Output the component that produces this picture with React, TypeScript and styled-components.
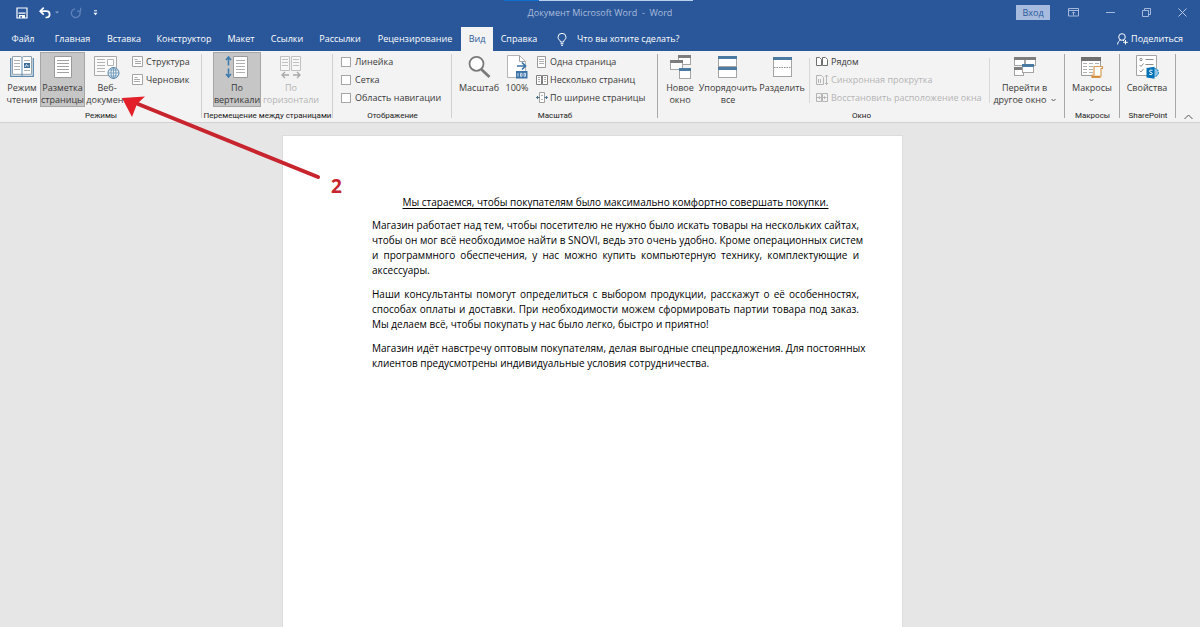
import React from "react";
import styled, { createGlobalStyle, css } from "styled-components";

const Global = createGlobalStyle`
  *, *::before, *::after { box-sizing: border-box; }
  html, body, #root { height: 100%; }
  body {
    margin: 0;
    overflow: hidden;
    background: #e6e6e6;
    color: #3a3a3a;
    font: 10px/12px "Open Sans", "Noto Sans", sans-serif;
  }
  button { font: inherit; color: inherit; background: none; border: 0; padding: 0; margin: 0; }
  svg { display: block; flex: none; }
`;

const Shell = styled.div`
  position: relative;
  display: flex;
  flex-direction: column;
  height: 100%;
`;

/* ---------- title bar ---------- */

const Header = styled.header`
  background: #2a579a;
  color: #fff;
`;

const TitleBar = styled.div`
  display: grid;
  grid-template-columns: 1fr auto 1fr;
  align-items: center;
  height: 27px;
  padding-bottom: 2px;
`;

const QuickAccess = styled.div`
  display: flex;
  align-items: center;
  gap: 11px;
  padding-left: 16px;
`;

const UndoGroup = styled.div`
  display: flex;
  align-items: center;
  gap: 4px;
`;

const IconButton = styled.button`
  display: flex;
  align-items: center;
  justify-content: center;
`;

const DocTitle = styled.h1`
  margin: 0;
  font-size: 9px;
  font-weight: 400;
  color: #a9bcdc;
  white-space: pre;
`;

const WindowTools = styled.div`
  display: flex;
  align-items: center;
  justify-content: flex-end;
  padding-right: 13px;
  gap: 27px;
`;

const SignIn = styled.button`
  width: 34px;
  height: 15px;
  margin-right: -9px;
  background: #a6bbdd;
  color: #2a579a;
  font-size: 9px;
`;

const TopStrip = styled.div`
  position: absolute;
  top: 0;
  left: 42%;
  width: 189px;
  height: 1px;
  background: linear-gradient(to right, #0f6fd0 0 35px, #b9cfee 35px);
`;

/* ---------- tabs ---------- */

const TabRow = styled.nav`
  display: flex;
  height: 24px;
`;

const Tab = styled.button<{ $width: number; $active?: boolean }>`
  width: ${(p) => p.$width}px;
  font-size: 9px;
  text-align: center;
  white-space: nowrap;
  ${(p) =>
    p.$active &&
    css`
      background: #f3f3f3;
      color: #2a579a;
    `}
`;

const TellMe = styled.button`
  display: flex;
  align-items: center;
  gap: 10px;
  margin-left: 12px;
  font-size: 9px;
`;

const Share = styled.button`
  display: flex;
  align-items: center;
  gap: 3px;
  margin-left: auto;
  padding-right: 17px;
  font-size: 9px;
`;

/* ---------- ribbon ---------- */

const Ribbon = styled.div`
  display: flex;
  height: 72px;
  background: #f3f3f3;
  border-bottom: 1px solid #d2d2d2;
`;

const Group = styled.section<{ $width: number; $strong?: boolean }>`
  position: relative;
  display: flex;
  flex-direction: column;
  width: ${(p) => p.$width}px;
  &::after {
    content: "";
    position: absolute;
    right: 0;
    top: 3px;
    bottom: 4px;
    width: 1px;
    background: ${(p) => (p.$strong ? "#a8a8a8" : "#d0d0d0")};
  }
`;

const GroupBody = styled.div<{ $indent?: number }>`
  display: flex;
  flex: 1;
  padding: 1px 0 0 ${(p) => p.$indent ?? 0}px;
`;

const GroupName = styled.h2`
  margin: 0;
  height: 13px;
  font: 400 8px/13px Roboto, "Open Sans", sans-serif;
  color: #222;
  text-align: center;
  white-space: nowrap;
`;

const BigButton = styled.button<{ $width: number; $pressed?: boolean }>`
  display: flex;
  flex-direction: column;
  align-items: center;
  gap: 3px;
  width: ${(p) => p.$width}px;
  height: 55px;
  padding-top: 3px;
  font-size: 9px;
  line-height: 12px;
  white-space: pre;
  &:disabled { color: #b4b4b4; }
  ${(p) =>
    p.$pressed &&
    css`
      background: #c6c6c6;
      outline: 1px solid #a6a6a6;
      outline-offset: -1px;
    `}
`;

const Stack = styled.div<{ $left?: number }>`
  display: flex;
  flex-direction: column;
  margin: 1px 0 0 ${(p) => p.$left ?? 0}px;
`;

const SmallButton = styled.button`
  display: flex;
  align-items: center;
  gap: 2px;
  height: 18px;
  font-size: 9px;
  white-space: nowrap;
  &:disabled { color: #b4b4b4; }
`;

const CheckLabel = styled.label`
  display: flex;
  align-items: center;
  gap: 4px;
  height: 18px;
  font-size: 9px;
  white-space: nowrap;
`;

const CheckBox = styled.input`
  appearance: none;
  width: 10px;
  height: 10px;
  margin: 0;
  border: 1px solid #a6a6a6;
  background: #fff;
`;

const Divider = styled.div`
  width: 1px;
  height: 45px;
  margin-top: 5px;
  background: #d8d8d8;
`;

const Collapse = styled.button`
  display: flex;
  align-items: flex-end;
  margin-left: auto;
  padding: 0 7px 2px 0;
`;

/* ---------- document ---------- */

const Workspace = styled.main`
  flex: 1;
  display: flex;
  justify-content: center;
  padding: 13px 15px 0 0;
`;

const Page = styled.article`
  width: 619px;
  padding: 59px 43px 0 89px;
  background: #fff;
  box-shadow: 0 0 0 1px #dcdcdc;
  color: #000;
  font: 10px/15px "Open Sans", sans-serif;
`;

const Heading = styled.p`
  margin: 0 0 8px;
  text-align: center;
  text-decoration: underline;
  text-underline-offset: 2px;
`;

const Paragraph = styled.p`
  margin: 0 0 9px;
`;

const Line = styled.span`
  display: block;
  white-space: nowrap;
  text-align: justify;
  text-align-last: justify;
  &:last-child { text-align-last: left; }
`;

/* ---------- annotation ---------- */

const Arrow = styled.svg`
  position: absolute;
  left: 120px;
  top: 90px;
`;

const Mark = styled.span`
  position: absolute;
  left: 331px;
  top: 174px;
  font: 700 19px/24px "Open Sans", sans-serif;
  color: #c8242d;
`;

/* ---------- icons ---------- */

const SaveIcon = () => (
  <svg width="12" height="12" viewBox="0 0 12 12">
    <path d="M1 1h10v10H1z" fill="none" stroke="#fff" strokeWidth="1.2" />
    <path d="M2.5 5.5h7v1.3h-7zM3 8h6v3H3z" fill="#fff" />
    <path d="M4.5 9h1.3v2H4.5z" fill="#2a579a" />
  </svg>
);

const UndoIcon = () => (
  <svg width="12" height="12" viewBox="0 0 12 12">
    <path d="M1.5 4.2h6a3 3 0 0 1 0 6.300H6.500" fill="none" stroke="#fff" strokeWidth="1.7" />
    <path d="M4.700.7 1.200 4.200l3.500 3.500" fill="none" stroke="#fff" strokeWidth="1.700" />
  </svg>
);

const RedoIcon = () => (
  <svg width="12" height="12" viewBox="0 0 12 12">
    <path d="M5 1.800A4.400 4.400 0 1 0 9.600 4" fill="none" stroke="#5f82ba" strokeWidth="1.300" />
    <path d="M7 4.200h3.600V.8" fill="none" stroke="#5f82ba" strokeWidth="1.200" />
  </svg>
);

const TinyCaret = ({ color = "#8ba6d0" }: { color?: string }) => (
  <svg width="4" height="3" viewBox="0 0 4 3">
    <path d="M0 .5h4L2 2.500z" fill={color} />
  </svg>
);

const CustomizeIcon = () => (
  <svg width="5" height="6" viewBox="0 0 5 6">
    <path d="M1 .8h3" stroke="#fff" />
    <path d="M.5 2.800h4L2.500 5.200z" fill="#fff" />
  </svg>
);

const RibbonOptionsIcon = () => (
  <svg width="11" height="9" viewBox="0 0 11 9" fill="none" stroke="#a3b8da">
    <path d="M.5.500h10v7.500H.500zM.5 2.500h10M5.500 7.500V4M4 5.300 5.500 3.800 7 5.300" />
  </svg>
);
const MinimizeIcon = () => (
  <svg width="9" height="9" viewBox="0 0 9 9" stroke="#a3b8da"><path d="M0 4.500h9" /></svg>
);
const RestoreIcon = () => (
  <svg width="9" height="9" viewBox="0 0 9 9" fill="none" stroke="#a3b8da">
    <path d="M.5 2.500h6v6h-6zM2.500 2.500v-2h6v6h-2" />
  </svg>
);
const CloseIcon = () => (
  <svg width="9" height="9" viewBox="0 0 9 9" stroke="#b9c9e4"><path d="m.5.500 8 8M8.500.500l-8 8" /></svg>
);

const BulbIcon = () => (
  <svg width="10" height="13" viewBox="0 0 10 13" fill="none" stroke="#fff">
    <path d="M3.500 9c0-1.800-2.500-2.500-2.500-4.700a4 4 0 0 1 8 0C9 6.500 6.500 7.200 6.500 9zM3.500 10.700h3M4 12.300h2" />
  </svg>
);

const PersonIcon = () => (
  <svg width="11" height="12" viewBox="0 0 11 12" fill="none" stroke="#fff">
    <circle cx="5" cy="4" r="3.300" />
    <path d="M.6 11.500C.8 9 2 7.500 3.800 7M6 7.200l1.200.8M8.500 7v4.500M6.200 9.300h4.600" />
  </svg>
);

const lines = (x1: number, x2: number, ys: number[]) =>
  ys.map((y) => `M${x1} ${y}H${x2}`).join("");

const ReadIcon = () => (
  <svg width="24" height="24" viewBox="0 0 24 24" fill="none">
    <path d="M.7 3v18.300h22.600V3" stroke="#5f8bb0" strokeWidth="1.300" />
    <path d="M2.500 1.500H10q2 0 2 1.500 0-1.500 2-1.500h7.500v17.800H2.500z" fill="#fff" stroke="#93a3b0" />
    <path d="M12 3v18" stroke="#5f8bb0" />
    <path d={lines(4, 10, [5.500, 8.500, 11.500, 14.500])} stroke="#b0b0b0" />
    <path d={lines(14, 20, [5.500, 15.500])} stroke="#b0b0b0" />
    <path d="M14 8h6v5h-6z" fill="#3b6f9c" />
    <path d="m15 12 1.500-2.500 1.500 2 1-1" stroke="#fff" strokeWidth=".8" />
  </svg>
);

const PageIcon = () => (
  <svg width="24" height="24" viewBox="0 0 24 24" fill="none">
    <path d="M3.500 1.500h17v21h-17z" fill="#fff" stroke="#9a9a9a" />
    <path d={lines(6, 18, [5.500, 8.500, 11.500, 14.500, 17.500])} stroke="#a0a0a0" />
  </svg>
);

const WebIcon = () => (
  <svg width="26" height="24" viewBox="0 0 26 24" fill="none">
    <path d="M.5 1.500h22v19H.5z" fill="#fafafa" stroke="#a8a8a8" />
    <path d={lines(3, 11, [4.500, 7.500, 10.500, 13.500, 16.500])} stroke="#b4b4b4" />
    <path d="M13.500 4.500h6v6h-6z" fill="#fff" stroke="#b4b4b4" />
    <circle cx="19.500" cy="18" r="5.500" fill="#eaf2f8" stroke="#5b89ad" />
    <path d="M14 18h11M19.500 12.500v11M15 15h9M15 21h9" stroke="#5b89ad" strokeWidth=".7" />
    <ellipse cx="19.500" cy="18" rx="2.500" ry="5.500" stroke="#5b89ad" strokeWidth=".8" />
  </svg>
);

const OutlineIcon = ({ indent = 3 }: { indent?: number }) => (
  <svg width="12" height="12" viewBox="0 0 12 12" fill="none">
    <path d="M.5.500h10v10H.5z" fill="#fff" stroke="#a4a4a4" />
    <path d={`M2.500 3.500h3M${indent} 5.500h6M${indent} 7.500h6`} stroke="#a8a8a8" />
  </svg>
);

const VerticalIcon = () => (
  <svg width="24" height="24" viewBox="0 0 24 24" fill="none">
    <path d="M8.500 1.500h14v21h-14z" fill="#fff" stroke="#9a9a9a" />
    <path d={lines(11, 20, [5.500, 8.500, 11.500, 14.500, 17.500])} stroke="#b0b0b0" />
    <path d="M3.500 2.500v8M1 5l2.500-3L6 5M3.500 13.500v8M1 19l2.500 3L6 19" stroke="#3f7cae" strokeWidth="1.600" />
  </svg>
);

const HorizontalIcon = () => (
  <svg width="24" height="24" viewBox="0 0 24 24" fill="none" stroke="#c0c0c0">
    <path d="M1.500 1.500h9v14h-9zM12.500 1.500h9v14h-9z" fill="#f7f7f7" />
    <path d={lines(3, 9, [4.500, 7.500, 10.500]) + lines(14, 20, [4.500, 7.500, 10.500])} />
    <path d="M3 20h7M6 17l-3 3 3 3M14 20h7M18 17l3 3-3 3" stroke="#a8a8a8" strokeWidth="1.300" />
  </svg>
);

const ZoomIcon = () => (
  <svg width="24" height="24" viewBox="0 0 24 24" fill="none">
    <path d="m14.500 14.500 8 7.500" stroke="#7a7a7a" strokeWidth="2.800" />
    <circle cx="9.500" cy="8.800" r="7" fill="#fff" stroke="#7a7a7a" strokeWidth="1.800" />
  </svg>
);

const HundredIcon = () => (
  <svg width="24" height="24" viewBox="0 0 24 24" fill="none">
    <path d="M2.500.500h12l6 6v16h-18z" fill="#fff" stroke="#b4b4b4" />
    <path d="M14.500.500v6h6" stroke="#a0a0a0" />
    <path d="M12 11h8M17 7.500l3.500 3.500-3.500 3.500" stroke="#3b73a8" strokeWidth="1.700" />
    <path d="M11 16h11.500v7.500H11z" fill="#3b73a8" />
    <path d="M13 18v3.500M15.500 18.300h1.500v3h-1.500zM19 18.300h1.500v3H19z" stroke="#dfeaf4" strokeWidth=".9" />
  </svg>
);

const OnePageIcon = () => (
  <svg width="12" height="12" viewBox="0 0 12 12" fill="none">
    <path d="M1.500.500h8v11h-8z" fill="#fff" stroke="#9a9a9a" />
    <path d={lines(3, 8, [3.500, 5.500, 7.500])} stroke="#b0b0b0" />
  </svg>
);
const ManyPagesIcon = () => (
  <svg width="12" height="12" viewBox="0 0 12 12" fill="none">
    <path d="M.5 1.500h5v9h-5zM6.500 1.500h5v9h-5z" fill="#fff" stroke="#808080" />
    <path d={lines(2, 4, [3.500, 5.500, 7.500]) + lines(8, 10, [3.500, 5.500, 7.500])} stroke="#a8a8a8" />
  </svg>
);
const PageWidthIcon = () => (
  <svg width="12" height="12" viewBox="0 0 12 12" fill="none">
    <path d="M3.500.500h5v10h-5z" fill="#fff" stroke="#a0a0a0" />
    <path d={lines(5, 7, [3.500, 7.500])} stroke="#b0b0b0" />
    <path d="M.500 5.500h3M8.500 5.500h3M2 4 .5 5.500 2 7M10 4l1.500 1.500L10 7" stroke="#4a6f90" />
  </svg>
);

const Win = ({ x, y, w, h, bar }: { x: number; y: number; w: number; h: number; bar: string }) => (
  <>
    <rect x={x + 0.5} y={y + 0.5} width={w - 1} height={h - 1} fill="#fff" stroke="#a4a4a4" />
    <rect x={x} y={y} width={w} height="3" fill={bar} />
  </>
);

const NewWindowIcon = () => (
  <svg width="24" height="24" viewBox="0 0 24 24">
    <Win x={10} y={0} w={13} h={10} bar="#7d7d7d" />
    <Win x={2} y={5} w={13} h={10} bar="#7d7d7d" />
    <Win x={11} y={13} w={12} h={11} bar="#4b7ba3" />
  </svg>
);
const ArrangeIcon = () => (
  <svg width="24" height="24" viewBox="0 0 24 24">
    <Win x={2} y={1} w={19} h={11} bar="#4b7ba3" />
    <Win x={2} y={12} w={19} h={11} bar="#4b7ba3" />
  </svg>
);
const SplitIcon = () => (
  <svg width="24" height="24" viewBox="0 0 24 24">
    <Win x={3} y={2} w={19} h={20} bar="#4b7ba3" />
    <path d="M4 12.500h17" stroke="#8c8c8c" strokeDasharray="1.500 1" />
  </svg>
);
const SwitchIcon = () => (
  <svg width="24" height="24" viewBox="0 0 24 24">
    <Win x={1} y={2} w={11} h={9} bar="#7d7d7d" />
    <Win x={12} y={2} w={11} h={9} bar="#7d7d7d" />
    <Win x={1} y={12} w={10} h={9} bar="#7d7d7d" />
    <Win x={9} y={9} w={12} h={9} bar="#4b7ba3" />
  </svg>
);

const SideIcon = () => (
  <svg width="14" height="12" viewBox="0 0 14 12" fill="none" stroke="#6f6f6f">
    <path d="M1.500 1.500h3l2 2v6h-5zM7.500 1.500h3l2 2v6h-5z" fill="#fff" />
  </svg>
);
const SyncIcon = () => (
  <svg width="14" height="12" viewBox="0 0 14 12" fill="none" stroke="#b4b4b4">
    <path d="M1.500 1.500h5l2 2v7h-7zM3.500 5v4M5.500 5v4M11.500 1v9.500M10 2.500 11.500 1 13 2.500M10 9l1.500 1.500L13 9" />
  </svg>
);
const ResetIcon = () => (
  <svg width="14" height="12" viewBox="0 0 14 12" fill="none" stroke="#b4b4b4">
    <path d="M1.500 1.500h5v8h-5zM7.500 1.500h5v8h-5zM2 5.500h3M4 4.500 5.500 5.500 4 7M8.500 5.500h3M10 4.500 8.500 5.500 10 7" />
  </svg>
);

const MacroIcon = () => (
  <svg width="24" height="24" viewBox="0 0 24 24" fill="none">
    <path d="M1.500 2.500h19v18h-19z" fill="#fff" stroke="#9a9a9a" />
    <path d="M1 2h20v4H1z" fill="#6f6f6f" />
    <path d={lines(3, 7, [8.500, 11.500, 14.500, 17.500]) + lines(9, 13, [8.500, 11.500, 14.500, 17.500]) + "M15 8.500h4"} stroke="#b0b0b0" />
    <path d="M14 11.500h8.500v2H21v7.500q0 1.500-1.500 1.500h-7.500v-2.500h2z" fill="#fff" stroke="#d99a55" strokeWidth="1.200" />
    <path d="M12 21.500h8" stroke="#d08a3c" strokeWidth="1.600" />
  </svg>
);

const PropertiesIcon = () => (
  <svg width="24" height="24" viewBox="0 0 24 24" fill="none">
    <path d="M1.500.500h20v20h-20z" fill="#fff" stroke="#a4a4a4" />
    <circle cx="6" cy="4.500" r="1.200" stroke="#8c8c8c" />
    <path d="m4.500 10 1.500 1.500L8.500 8.500M4.500 15.500 6 17l2.500-3M10.500 4.500h8M10.500 9.500h8" stroke="#8c8c8c" />
    <circle cx="19.500" cy="17.500" r="4" fill="#8fc3e4" stroke="#0072b8" strokeDasharray="2 1" />
    <path d="m11.500 13 8-1.300v12L11.500 22.500z" fill="#0072b8" />
    <path d="M17.500 15.300q-3-.800-3 .8 0 1 1.500 1.400t1.300 1.400q-.5 1.200-3 .4" stroke="#fff" />
  </svg>
);

const Chevron = ({ up }: { up?: boolean }) => (
  <svg width={up ? 9 : 5} height={up ? 6 : 4} viewBox={up ? "0 0 9 6" : "0 0 5 4"} fill="none" stroke="#555">
    <path d={up ? "M.5 5 4.500 1l4 4" : "M.5 1l2 2 2-2"} />
  </svg>
);

const CaretLine = styled.span`
  display: flex;
  align-items: center;
  justify-content: center;
  gap: 2px;
  height: 12px;
`;

/* ---------- data ---------- */

const tabs = [
  { label: "Файл", width: 46 },
  { label: "Главная", width: 53 },
  { label: "Вставка", width: 50 },
  { label: "Конструктор", width: 70 },
  { label: "Макет", width: 44 },
  { label: "Ссылки", width: 48 },
  { label: "Рассылки", width: 58 },
  { label: "Рецензирование", width: 92 },
  { label: "Вид", width: 32, active: true },
  { label: "Справка", width: 52 },
];

const paragraphs = [
  [
    "Магазин работает над тем, чтобы посетителю не нужно было искать товары на нескольких сайтах,",
    "чтобы он мог всё необходимое найти в SNOVI, ведь это очень удобно. Кроме операционных систем",
    "и программного обеспечения, у нас можно купить компьютерную технику, комплектующие и",
    "аксессуары.",
  ],
  [
    "Наши консультанты помогут определиться с выбором продукции, расскажут о её особенностях,",
    "способах оплаты и доставки. При необходимости можем сформировать партии товара под заказ.",
    "Мы делаем всё, чтобы покупать у нас было легко, быстро и приятно!",
  ],
  [
    "Магазин идёт навстречу оптовым покупателям, делая выгодные спецпредложения. Для постоянных",
    "клиентов предусмотрены индивидуальные условия сотрудничества.",
  ],
];

export default function App() {
  return (
    <Shell>
      <Global />
      <Header>
        <TitleBar>
          <QuickAccess>
            <IconButton aria-label="Сохранить"><SaveIcon /></IconButton>
            <UndoGroup>
              <IconButton aria-label="Отменить"><UndoIcon /></IconButton>
              <TinyCaret />
            </UndoGroup>
            <IconButton aria-label="Повторить"><RedoIcon /></IconButton>
            <IconButton aria-label="Настройка панели"><CustomizeIcon /></IconButton>
          </QuickAccess>
          <DocTitle>{"Документ Microsoft Word  -  Word"}</DocTitle>
          <WindowTools>
            <SignIn>Вход</SignIn>
            <IconButton aria-label="Параметры ленты"><RibbonOptionsIcon /></IconButton>
            <IconButton aria-label="Свернуть"><MinimizeIcon /></IconButton>
            <IconButton aria-label="Восстановить"><RestoreIcon /></IconButton>
            <IconButton aria-label="Закрыть"><CloseIcon /></IconButton>
          </WindowTools>
        </TitleBar>
        <TabRow>
          {tabs.map((t) => (
            <Tab key={t.label} $width={t.width} $active={t.active}>{t.label}</Tab>
          ))}
          <TellMe><BulbIcon />Что вы хотите сделать?</TellMe>
          <Share><PersonIcon />Поделиться</Share>
        </TabRow>
      </Header>
      <TopStrip />

      <Ribbon>
        <Group $width={202}>
          <GroupBody $indent={4}>
            <BigButton $width={36}><ReadIcon />{"Режим\nчтения"}</BigButton>
            <BigButton $width={45} $pressed><PageIcon />{"Разметка\nстраницы"}</BigButton>
            <BigButton $width={44}><WebIcon />{"Веб-\nдокумент"}</BigButton>
            <Stack $left={3}>
              <SmallButton><OutlineIcon />Структура</SmallButton>
              <SmallButton><OutlineIcon indent={2} />Черновик</SmallButton>
            </Stack>
          </GroupBody>
          <GroupName>Режимы</GroupName>
        </Group>

        <Group $width={131}>
          <GroupBody $indent={11}>
            <BigButton $width={48} $pressed><VerticalIcon />{"По\nвертикали"}</BigButton>
            <BigButton $width={60} disabled><HorizontalIcon />{"По\nгоризонтали"}</BigButton>
          </GroupBody>
          <GroupName>Перемещение между страницами</GroupName>
        </Group>

        <Group $width={119}>
          <GroupBody $indent={8}>
            <Stack>
              <CheckLabel><CheckBox type="checkbox" />Линейка</CheckLabel>
              <CheckLabel><CheckBox type="checkbox" />Сетка</CheckLabel>
              <CheckLabel><CheckBox type="checkbox" />Область навигации</CheckLabel>
            </Stack>
          </GroupBody>
          <GroupName>Отображение</GroupName>
        </Group>

        <Group $width={206} $strong>
          <GroupBody $indent={5}>
            <BigButton $width={44}><ZoomIcon />Масштаб</BigButton>
            <BigButton $width={32}><HundredIcon />100%</BigButton>
            <Stack $left={3}>
              <SmallButton><OnePageIcon />Одна страница</SmallButton>
              <SmallButton><ManyPagesIcon />Несколько страниц</SmallButton>
              <SmallButton><PageWidthIcon />По ширине страницы</SmallButton>
            </Stack>
          </GroupBody>
          <GroupName>Масштаб</GroupName>
        </Group>

        <Group $width={407} $strong>
          <GroupBody $indent={4}>
            <BigButton $width={36}><NewWindowIcon />{"Новое\nокно"}</BigButton>
            <BigButton $width={60}><ArrangeIcon />{"Упорядочить\nвсе"}</BigButton>
            <BigButton $width={48}><SplitIcon />Разделить</BigButton>
            <Stack $left={3}><Divider /></Stack>
            <Stack $left={5}>
              <SmallButton><SideIcon />Рядом</SmallButton>
              <SmallButton disabled><SyncIcon />Синхронная прокрутка</SmallButton>
              <SmallButton disabled><ResetIcon />Восстановить расположение окна</SmallButton>
            </Stack>
            <Stack $left={7}><Divider /></Stack>
            <BigButton $width={70}>
              <SwitchIcon />
              <span>Перейти в<CaretLine>другое окно <Chevron /></CaretLine></span>
            </BigButton>
          </GroupBody>
          <GroupName>Окно</GroupName>
        </Group>

        <Group $width={55} $strong>
          <GroupBody>
            <BigButton $width={54}>
              <MacroIcon />
              <span>Макросы<CaretLine><Chevron /></CaretLine></span>
            </BigButton>
          </GroupBody>
          <GroupName>Макросы</GroupName>
        </Group>

        <Group $width={56} $strong>
          <GroupBody>
            <BigButton $width={54}><PropertiesIcon />Свойства</BigButton>
          </GroupBody>
          <GroupName>SharePoint</GroupName>
        </Group>

        <Collapse aria-label="Свернуть ленту"><Chevron up /></Collapse>
      </Ribbon>

      <Workspace>
        <Page>
          <Heading>Мы стараемся, чтобы покупателям было максимально комфортно совершать покупки.</Heading>
          {paragraphs.map((p) => (
            <Paragraph key={p[0]}>
              {p.map((l) => <Line key={l}>{l} </Line>)}
            </Paragraph>
          ))}
        </Page>
      </Workspace>

      <Arrow width="204" height="94" viewBox="0 0 204 94" aria-hidden="true">
        <path d="M18 14 198 87" stroke="#c8242d" strokeWidth="4" strokeLinecap="round" />
        <path d="M2 8 25 6.500 17 14l-5 13z" fill="#e3202a" />
      </Arrow>
      <Mark>2</Mark>
    </Shell>
  );
}
